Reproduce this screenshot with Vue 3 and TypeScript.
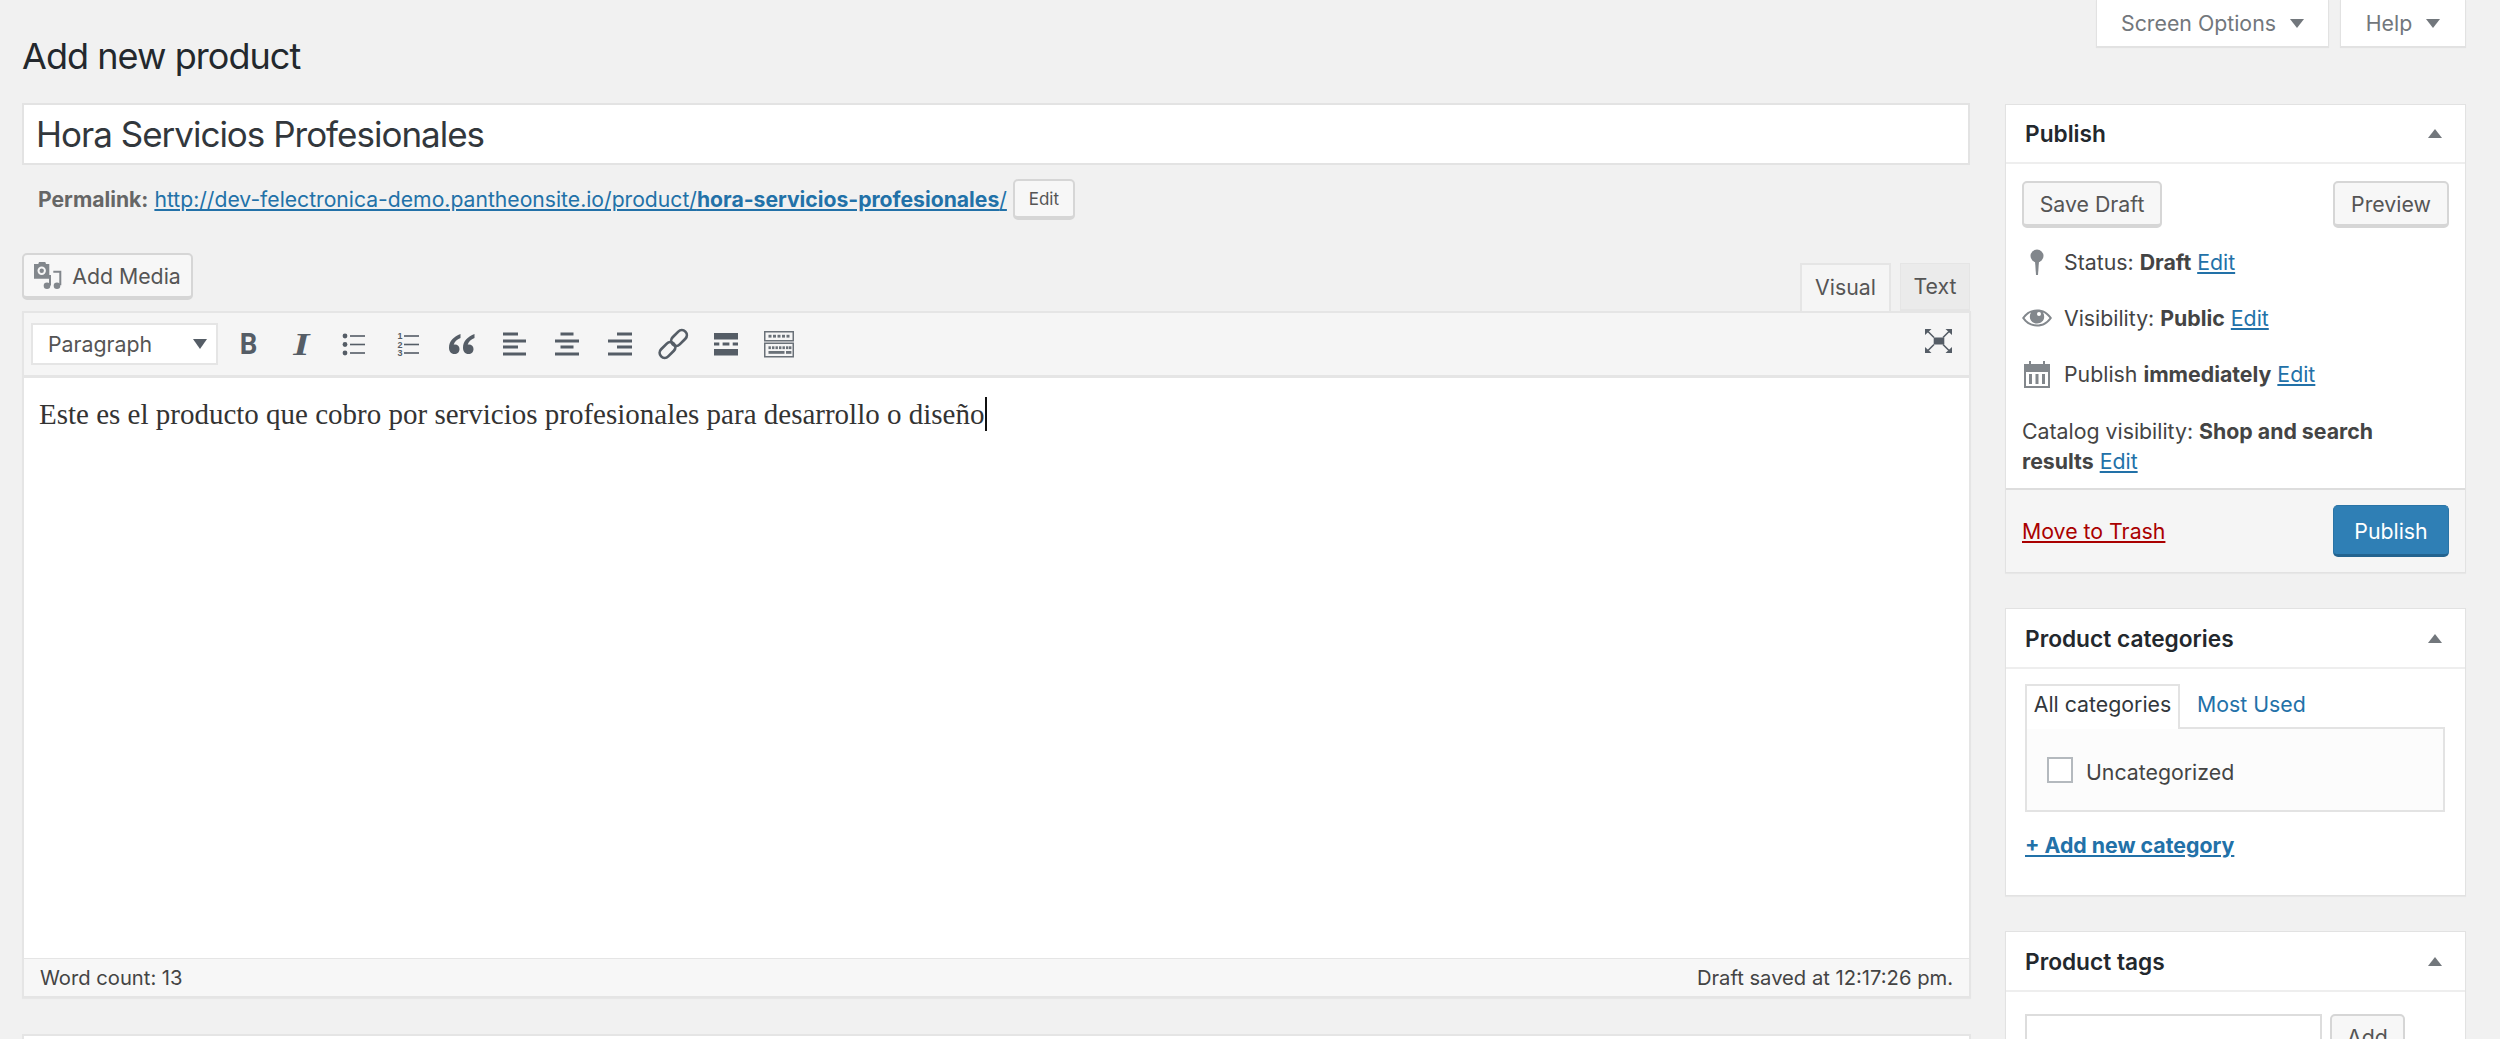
<script setup lang="ts">
type Bar = [number, number]
const aligns: Bar[][] = [
  [[9, 15], [9, 23], [9, 15], [9, 23]],
  [[13.500, 13], [8, 24], [13.500, 13], [8, 24]],
  [[17, 15], [8, 24], [17, 15], [8, 24]],
]
const barY = [8.500, 15.500, 21.500, 28.500]
const listY = [12, 20.500, 29]
const sinkTop = [9.500, 14, 18.500, 23, 27.500]
const sinkMid = [9.500, 13, 16.500, 20, 23.500, 27, 30]
</script>

<template>
  <div class="page">
    <header class="top">
      <h1 class="heading">Add new product</h1>
      <div class="meta">
        <div class="meta-tab tab-screen">Screen Options<i class="down"></i></div>
        <div class="meta-tab tab-help">Help<i class="down"></i></div>
      </div>
    </header>

    <div class="columns">
      <main class="main">
        <div class="title-input">Hora Servicios Profesionales</div>
        <div class="permalink">
          <b>Permalink:</b>
          <a class="link">http://dev-felectronica-demo.pantheonsite.io/product/<b>hora-servicios-profesionales</b>/</a>
          <span class="btn btn-edit">Edit</span>
        </div>

        <div class="media-row">
          <span class="btn btn-media">
            <svg class="media-icon" viewBox="0 0 30 30" width="30" height="30" fill="#82878c">
              <path d="M0 3h4.300l.7-2h6.300l.7 2h3.300v14.700H0z"/>
              <circle cx="7.700" cy="9.700" r="4.200" fill="#f7f7f7"/>
              <circle cx="7.700" cy="9.700" r="2.200"/>
              <path d="M19.300 9.700h8v14.600h-2V11.700h-6z"/>
              <circle cx="23" cy="24.800" r="3.300"/>
              <rect x="15" y="14" width="2" height="10.500"/>
              <circle cx="13" cy="24.800" r="3.300"/>
            </svg>
            Add Media
          </span>
          <div class="tabs">
            <span class="tab tab-visual">Visual</span>
            <span class="tab tab-text">Text</span>
          </div>
        </div>

        <section class="editor">
          <div class="toolbar">
            <div class="format">Paragraph<i class="down dark"></i></div>
            <div class="tools">
              <span class="tool"><span class="glyph-b">B</span></span>
              <span class="tool"><span class="glyph-i">I</span></span>
              <span class="tool">
                <svg viewBox="0 0 40 40" width="40" height="40" fill="#555d66">
                  <template v-for="y in listY" :key="y">
                    <circle cx="10" :cy="y" r="2.400"/>
                    <rect x="15" :y="y - 0.800" width="15" height="1.600"/>
                  </template>
                </svg>
              </span>
              <span class="tool">
                <svg viewBox="0 0 40 40" width="40" height="40" fill="#555d66">
                  <text v-for="(y, i) in listY" :key="y" x="9.500" :y="y + 3.200" class="ol-n">{{ i + 1 }}</text>
                  <rect v-for="y in listY" :key="'l' + y" x="16" :y="y - 0.800" width="15" height="1.600"/>
                </svg>
              </span>
              <span class="tool">
                <svg viewBox="0 0 40 40" width="40" height="40" fill="#555d66">
                  <path d="M19.500 10C13 12.500 8 17 8 23.500 8 27.500 10 30 13.500 30c3 0 5-2 5-5s-2-4.500-4.500-4.500c-.5 0-1 .1-1.300.2.600-2.900 3.300-5.200 6.800-6.700z"/>
                  <path d="M33.500 10C27 12.500 22 17 22 23.500 22 27.500 24 30 27.500 30c3 0 5-2 5-5s-2-4.500-4.500-4.500c-.5 0-1 .1-1.300.2.600-2.900 3.300-5.200 6.800-6.700z"/>
                </svg>
              </span>
              <span v-for="(a, n) in aligns" :key="n" class="tool">
                <svg viewBox="0 0 40 40" width="40" height="40" fill="#555d66">
                  <rect v-for="(b, i) in a" :key="i" :x="b[0]" :y="barY[i]" :width="b[1]" height="3"/>
                </svg>
              </span>
              <span class="tool">
                <svg viewBox="0 0 40 40" width="40" height="40" fill="none" stroke="#555d66" stroke-width="2.700">
                  <rect x="21" y="5" width="10" height="18" rx="5" transform="rotate(45 26 14)"/>
                  <rect x="9.500" y="17" width="10" height="18" rx="5" transform="rotate(45 14.500 26)"/>
                </svg>
              </span>
              <span class="tool">
                <svg viewBox="0 0 40 40" width="40" height="40" fill="#555d66">
                  <rect x="8" y="9" width="24" height="6.500"/>
                  <rect x="8" y="18.500" width="5.300" height="3"/><rect x="16.600" y="18.500" width="6.800" height="3"/><rect x="26.700" y="18.500" width="5.300" height="3"/>
                  <rect x="8" y="25" width="24" height="6.500"/>
                </svg>
              </span>
              <span class="tool">
                <svg viewBox="0 0 40 40" width="40" height="40">
                  <g fill="none" stroke="#6a7178" stroke-width="1.500">
                    <rect x="5.750" y="7.750" width="28.500" height="9"/>
                    <rect x="5.750" y="19.250" width="28.500" height="13.500"/>
                  </g>
                  <g fill="#6a7178">
                    <rect v-for="x in sinkTop" :key="x" :x="x" y="10.800" width="3" height="2.800"/>
                    <rect v-for="x in sinkMid" :key="x" :x="x" y="22.300" width="2.400" height="2.800"/>
                    <rect x="9.500" y="27" width="16" height="2.800"/>
                    <rect x="27" y="27" width="5.400" height="2.800"/>
                  </g>
                </svg>
              </span>
            </div>
            <svg class="fullscreen" viewBox="0 0 27 24" width="27" height="24" fill="#555d66">
              <rect x="8.700" y="8.500" width="10.600" height="7"/>
              <path d="M0 0h6.500L0 6zM27 0h-6.500L27 6zM0 24h6.500L0 18zM27 24h-6.500L27 18z"/>
              <path d="M3 2.500l6 6M24 2.500l-6 6M3 21.500l6-6M24 21.500l-6-6" stroke="#555d66" stroke-width="1.600"/>
            </svg>
          </div>
          <div class="content">
            <p>Este es el producto que cobro por servicios profesionales para desarrollo o diseño<span class="caret"></span></p>
          </div>
          <div class="status">
            <span>Word count: 13</span>
            <span>Draft saved at 12:17:26 pm.</span>
          </div>
        </section>

        <div class="next-box"></div>
      </main>

      <aside class="side">
        <section class="box box-publish">
          <div class="box-head head-publish"><h2>Publish</h2><i class="up"></i></div>
          <div class="pub-actions">
            <span class="btn btn-save">Save Draft</span>
            <span class="btn btn-preview">Preview</span>
          </div>
          <div class="pub-rows">
            <div class="pub-row">
              <svg class="row-icon" viewBox="0 0 30 26" width="30" height="26" fill="#82878c">
                <circle cx="15" cy="7" r="6.500"/>
                <path d="M13 12h4l-1 14h-2z"/>
              </svg>
              <span>Status: <b>Draft</b> <a class="link">Edit</a></span>
            </div>
            <div class="pub-row">
              <svg class="row-icon" viewBox="0 0 30 20" width="30" height="20" fill="#82878c">
                <path d="M0 10C4 4 9 1.500 15 1.500S26 4 30 10c-4 6-9 8.500-15 8.500S4 16 0 10zm2.500 0C6 14.500 10 16.500 15 16.500S24 14.500 27.500 10C25 7 23 5.500 21 4.500c.8 1.300 1.200 2.800 1.200 4.300 0 4-3.200 6.700-7.200 6.700S7.800 12.800 7.800 8.800c0-1.500.4-3 1.200-4.300C7 5.500 5 7 2.500 10z"/>
                <circle cx="17" cy="6" r="2" fill="#fff"/>
              </svg>
              <span>Visibility: <b>Public</b> <a class="link">Edit</a></span>
            </div>
            <div class="pub-row">
              <svg class="row-icon" viewBox="0 0 28 28" width="28" height="28" fill="#82878c">
                <path d="M1 4h5v-3h2v3h12v-3h2v3h5v24H1zm2 8v14h22V12z" fill-rule="evenodd"/>
                <rect x="6" y="14" width="3" height="10"/><rect x="12.500" y="14" width="3" height="10"/><rect x="19" y="14" width="3" height="10"/>
              </svg>
              <span>Publish <b>immediately</b> <a class="link">Edit</a></span>
            </div>
          </div>
          <p class="catalog">Catalog visibility: <b>Shop and search results</b> <a class="link">Edit</a></p>
          <div class="pub-foot">
            <a class="trash">Move to Trash</a>
            <span class="btn btn-primary">Publish</span>
          </div>
        </section>

        <section class="box box-cats">
          <div class="box-head"><h2>Product categories</h2><i class="up"></i></div>
          <div class="cats">
            <div class="cat-tabs">
              <span class="cat-tab">All categories</span>
              <a class="cat-other">Most Used</a>
            </div>
            <div class="cat-panel">
              <i class="check"></i><span class="cat-label">Uncategorized</span>
            </div>
            <a class="link add-cat"><b>+ Add new category</b></a>
          </div>
        </section>

        <section class="box box-tags">
          <div class="box-head"><h2>Product tags</h2><i class="up"></i></div>
          <div class="tag-row">
            <div class="tag-input"></div>
            <span class="btn btn-add">Add</span>
          </div>
        </section>
      </aside>
    </div>
  </div>
</template>

<style>
html, body { margin: 0; background: #f1f1f1; overflow: hidden; }
</style>

<style scoped>
.page { width: 2500px; height: 1039px; overflow: hidden; background: #f1f1f1; color: #444; font-family: Inter, "Liberation Sans", sans-serif; font-size: 21.300px; }
.top { display: flex; justify-content: space-between; align-items: flex-start; height: 103px; padding: 0 34px 0 22px; box-sizing: border-box; }
.heading { margin: 34px 0 0; font-size: 36px; line-height: 44px; font-weight: 400; color: #23282d; letter-spacing: -0.950px; }
.meta { display: flex; gap: 11px; }
.meta-tab { height: 47px; box-sizing: border-box; background: #fff; border: 1px solid #e2e2e2; border-top: 0; box-shadow: 0 1px 1px rgba(0,0,0,.06); color: #72777c; display: flex; align-items: center; justify-content: center; gap: 14px; }
.tab-screen { width: 233px; }
.tab-help { width: 126px; }
.down { display: inline-block; width: 0; height: 0; border-left: 7px solid transparent; border-right: 7px solid transparent; border-top: 9px solid #72777c; }
.down.dark { border-top-color: #555d66; border-top-width: 10px; }
.up { display: block; width: 0; height: 0; border-left: 7px solid transparent; border-right: 7px solid transparent; border-bottom: 9px solid #72777c; }
.columns { display: flex; padding-left: 22px; gap: 35px; }
.main { width: 1948px; flex: none; }
.side { width: 461px; flex: none; display: flex; flex-direction: column; gap: 35px; padding-top: 1px; }

.title-input { height: 62px; box-sizing: border-box; background: #fff; border: 2px solid #e3e3e3; padding-left: 12px; display: flex; align-items: center; font-size: 35px; color: #32373c; letter-spacing: -1px; }
.permalink { height: 41px; margin-top: 14px; padding-left: 16px; display: flex; align-items: center; gap: 6px; color: #666; font-size: 21.150px; }
.link { color: #2271a8; text-decoration: underline; }
.btn { display: inline-flex; align-items: center; justify-content: center; box-sizing: border-box; background: #f7f7f7; border: 2px solid #d6d6d6; border-bottom-width: 4px; border-radius: 5px; color: #555; }
.btn-edit { width: 62px; height: 41px; font-size: 17px; }
.media-row { display: flex; justify-content: space-between; align-items: flex-end; margin-top: 33px; height: 58px; }
.btn-media { width: 171px; height: 47px; gap: 8px; align-self: flex-start; }
.media-icon { flex: none; }
.tabs { display: flex; gap: 9px; align-items: flex-end; }
.tab { height: 48px; box-sizing: border-box; display: flex; align-items: center; justify-content: center; color: #555; padding-bottom: 2px; }
.tab-visual { width: 91px; background: #f5f5f5; border: 2px solid #e5e5e5; border-bottom: 0; }
.tab-text { width: 70px; background: #ebebeb; border: 1px solid #e5e5e5; border-bottom: 2px solid #e5e5e5; }

.editor { border: 2px solid #e5e5e5; border-top: 0; box-shadow: 0 1px 1px rgba(0,0,0,.04); background: #fff; margin-right: -1px; }
.toolbar { height: 67px; box-sizing: border-box; background: #f5f5f5; border-top: 2px solid #e5e5e5; border-bottom: 3px solid #e5e5e5; display: flex; align-items: center; padding: 0 17px 0 7px; }
.format { width: 187px; height: 42px; box-sizing: border-box; background: #fff; border: 2px solid #e5e5e5; display: flex; align-items: center; justify-content: space-between; padding: 0 9px 0 15px; color: #555; }
.tools { display: flex; align-items: center; margin-left: 4px; flex: 1; }
.tool { width: 53px; height: 40px; display: flex; align-items: center; justify-content: center; color: #555d66; flex: none; }
.glyph-b { display: block; font: 700 30px/40px Roboto, sans-serif; transform: scaleX(.92); }
.glyph-i { display: block; font: italic 700 32px/40px "Liberation Serif", serif; transform: scaleX(1.3); }
.ol-n { font: 700 9px "Liberation Sans", sans-serif; }
.fullscreen { flex: none; margin-top: -6px; }
.content { height: 580px; box-sizing: border-box; padding: 19px 0 0 15px; background: #fff; }
.content p { margin: 0; font: 29px/34px "Liberation Serif", Georgia, serif; color: #333; display: flex; align-items: stretch; }
.caret { width: 2px; background: #111; margin-left: 1px; }
.status { height: 38px; box-sizing: border-box; background: #f7f7f7; border-top: 1px solid #e5e5e5; display: flex; justify-content: space-between; align-items: center; padding: 0 16px; font-size: 20.200px; color: #444; }
.next-box { height: 60px; margin-top: 36px; background: #fff; border: 2px solid #e5e5e5; margin-right: -1px; }

.box { background: #fff; border: 1px solid #e2e2e2; box-shadow: 0 1px 1px rgba(0,0,0,.04); box-sizing: border-box; flex: none; }
.box-publish { height: 469px; display: flex; flex-direction: column; }
.box-cats { height: 288px; }
.box-tags { height: 200px; }
.box-head { height: 60px; box-sizing: border-box; border-bottom: 2px solid #eee; display: flex; align-items: center; justify-content: space-between; padding: 0 23px 0 19px; }
.head-publish { height: 59px; }
.box-head h2 { margin: 0; font-size: 22.700px; font-weight: 600; color: #23282d; }
.pub-actions { display: flex; justify-content: space-between; padding: 17px 16px 0; }
.btn-save { width: 140px; height: 47px; }
.btn-preview { width: 116px; height: 47px; }
.pub-rows { margin-top: 6px; }
.pub-row { display: flex; align-items: center; height: 56px; padding-left: 16px; gap: 12px; }
.row-icon { width: 30px; flex: none; }
.catalog { margin: 14px 0 0; padding: 0 40px 0 16px; line-height: 30px; }
.pub-foot { margin-top: auto; height: 84px; box-sizing: border-box; background: #f5f5f5; border-top: 2px solid #ddd; display: flex; align-items: center; justify-content: space-between; padding: 0 16px; }
.trash { color: #a00; text-decoration: underline; }
.btn-primary { width: 116px; height: 52px; padding-top: 2px; background: #2f7fb5; border: 1px solid #2a74a6; border-bottom: 3px solid #23638f; color: #fff; }
.cats { padding: 15px 19px 0; }
.cat-tabs { display: flex; height: 43px; align-items: stretch; position: relative; z-index: 1; }
.cat-tab { width: 155px; box-sizing: border-box; border: 2px solid #e3e3e3; border-bottom: 0; background: #fff; display: flex; align-items: center; justify-content: center; color: #32373c; height: 45px; padding-bottom: 8px; }
.cat-other { color: #2271a8; margin-left: 17px; display: flex; align-items: center; padding-bottom: 4px; }
.cat-panel { height: 85px; box-sizing: border-box; border: 2px solid #e3e3e3; background: #fcfcfc; display: flex; align-items: center; padding-left: 20px; gap: 13px; width: 420px; }
.cat-label { margin-top: 5px; }
.check { width: 26px; height: 26px; box-sizing: border-box; border: 2px solid #b4b9be; background: #fff; flex: none; }
.add-cat { display: block; margin-top: 20px; }
.tag-row { display: flex; gap: 8px; padding: 22px 19px 0; }
.tag-input { width: 297px; height: 46px; box-sizing: border-box; border: 2px solid #ddd; background: #fff; }
.btn-add { width: 75px; height: 47px; }
b { font-weight: 700; }
</style>
